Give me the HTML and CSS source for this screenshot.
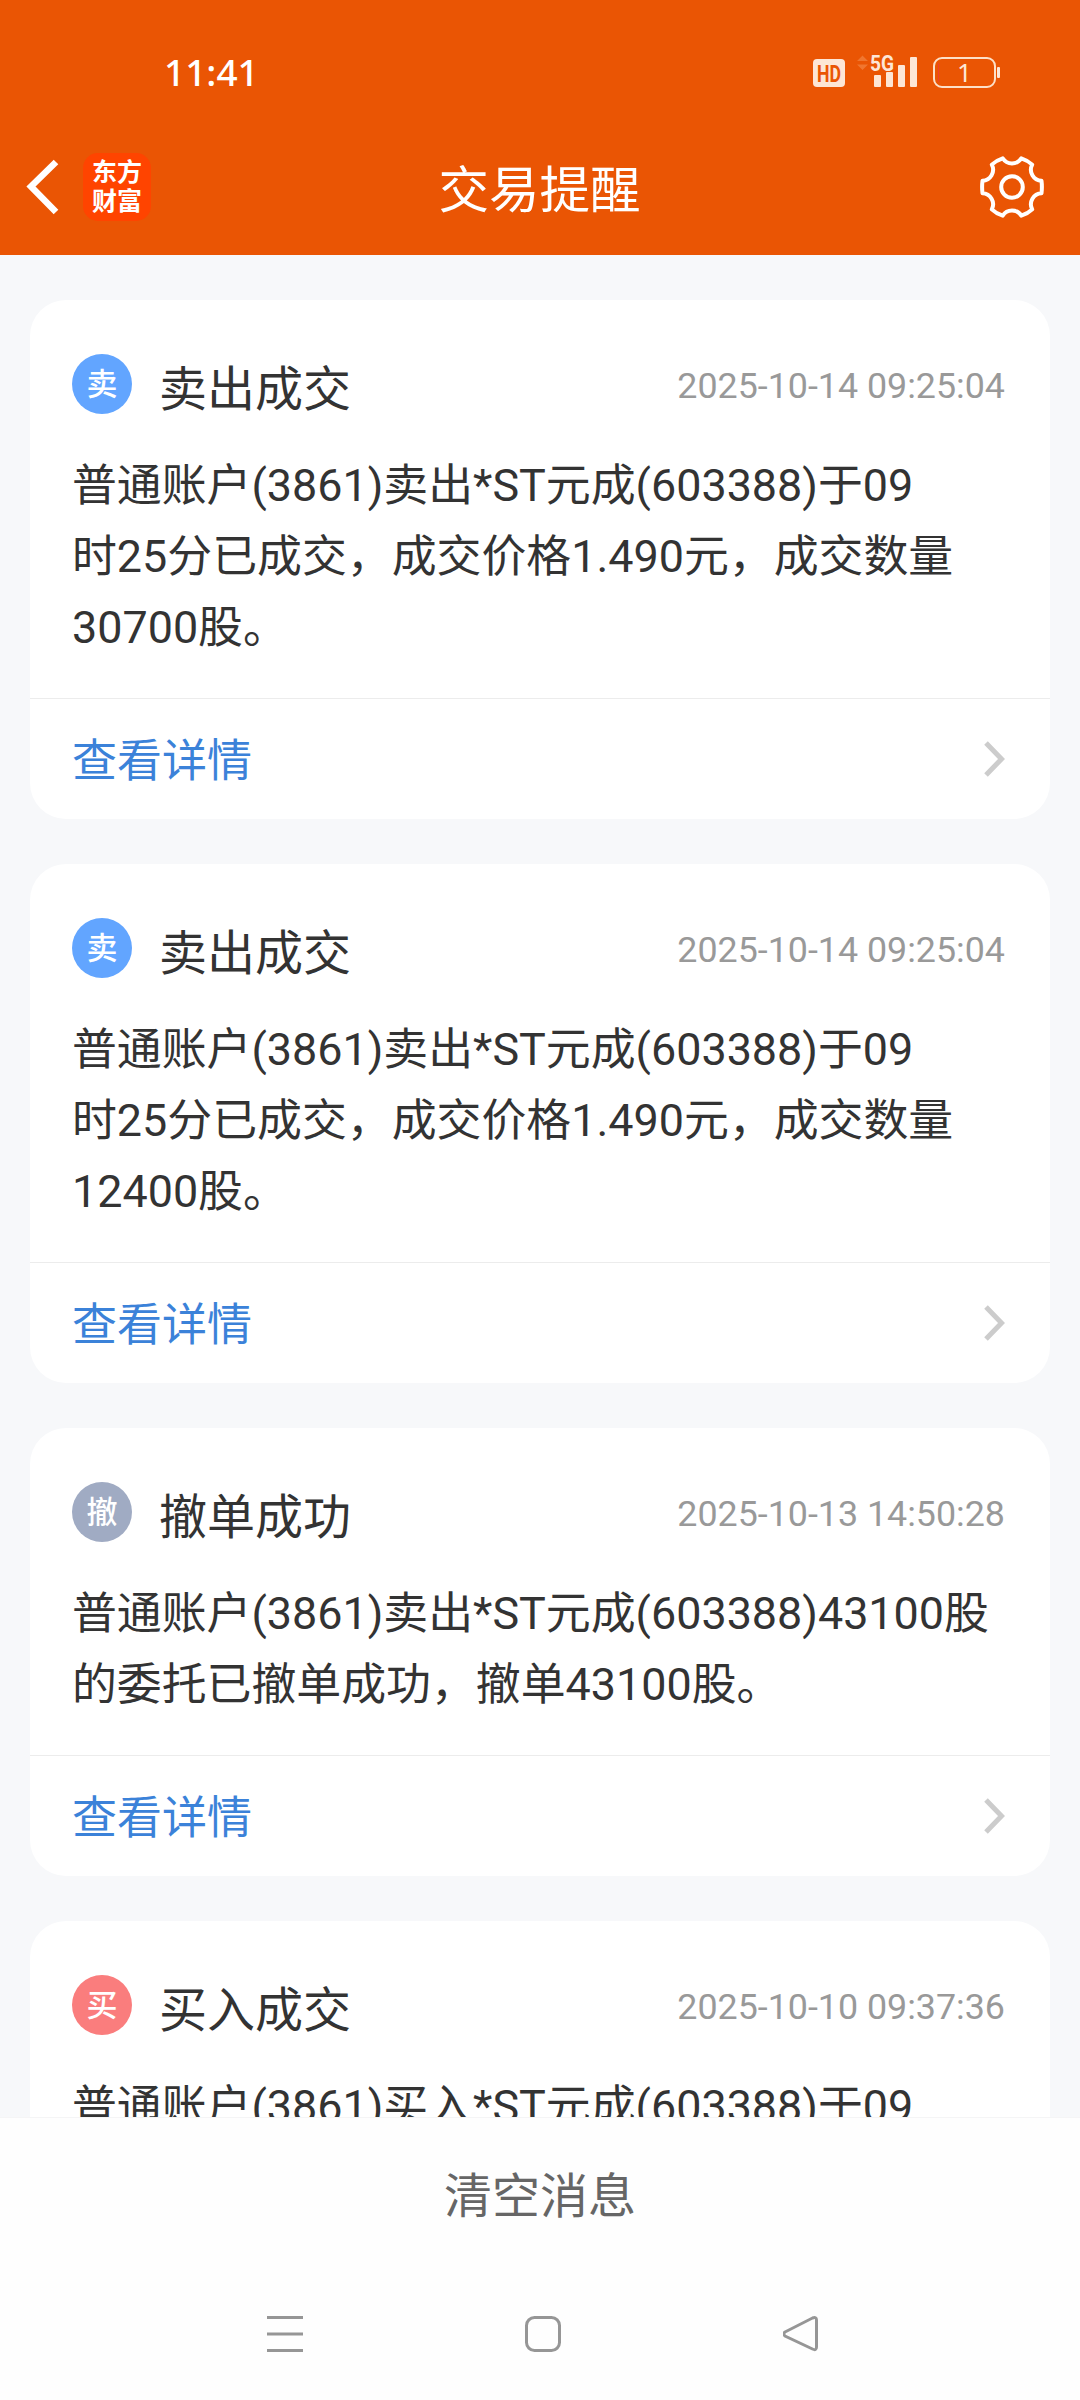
FILE: index.html
```html
<!DOCTYPE html>
<html lang="zh-CN">
<head>
    <meta charset="UTF-8">
    <meta name="viewport" content="width=device-width, initial-scale=1.0">
    <title>交易提醒</title>
    <link rel="stylesheet" href="styles.css">
</head>
<body>
    <!-- Header -->
    <header class="top">
        <div class="status-bar">
            <span class="time">11:41</span>
            <svg class="status-icons" width="190" height="40" viewBox="0 0 190 40">
                <rect x="2" y="7" width="32" height="28" rx="4" fill="#fde6d6"/>
                <text class="hd" x="6" y="29.500" textLength="24" lengthAdjust="spacingAndGlyphs">HD</text>
                <path d="M46 9 L51.500 3.500 L57 9 Z M46 12.500 L51.500 18 L57 12.500 Z" fill="#f0762f"/>
                <text class="net" x="59" y="18.500" textLength="24" lengthAdjust="spacingAndGlyphs">5G</text>
                <g fill="#fde6d6">
                    <rect x="63" y="23" width="7" height="12" rx="1"/>
                    <rect x="75" y="20" width="7" height="15" rx="1"/>
                    <rect x="87" y="13" width="7" height="22" rx="1"/>
                    <rect x="99" y="5" width="7" height="30" rx="1"/>
                    <rect x="186" y="15" width="3" height="11" rx="1"/>
                </g>
                <rect x="123" y="6" width="61" height="29" rx="8" fill="none" stroke="#fde0c8" stroke-width="2"/>
                <path d="M127.500 11 V30" stroke="#f0402a" stroke-width="1"/>
                <text class="level" x="146" y="30">1</text>
            </svg>
        </div>
        <div class="nav-bar">
            <div class="nav-left">
                <svg width="36" height="60" viewBox="0 0 36 60">
                    <path d="M32 5 L7 29.500 L32 55" fill="none" stroke="#fff" stroke-width="6.500"/>
                </svg>
                <div class="logo">东方<br>财富</div>
            </div>
            <h1>交易提醒</h1>
            <svg class="gear" width="68" height="68" viewBox="-34 -34 68 68">
                <path d="M29.500 -6.300 Q30.300 0 29.500 6.300 A11 11 0 0 0 20.200 22.400 Q16 26.500 9.300 28.700 A11 11 0 0 0 -9.300 28.700 Q-16 26.500 -20.200 22.400 A11 11 0 0 0 -29.500 6.300 Q-30.300 0 -29.500 -6.300 A11 11 0 0 0 -20.200 -22.400 Q-16 -26.500 -9.300 -28.700 A11 11 0 0 0 9.300 -28.700 Q16 -26.500 20.200 -22.400 A11 11 0 0 0 29.500 -6.300 Z"/>
                <circle r="10.800"/>
            </svg>
        </div>
    </header>

    <!-- Message List -->
    <main class="list">
        <section class="card">
            <div class="card-head">
                <span class="badge sell">卖</span>
                <h2>卖出成交</h2>
                <time>2025-10-14 09:25:04</time>
            </div>
            <p>普通账户(3861)卖出*ST元成(603388)于09<br>时25分已成交，成交价格1.490元，成交数量<br>30700股。</p>
            <a class="detail">
                查看详情
                <svg width="24" height="40" viewBox="0 0 24 40"><path d="M4 4 L19.500 20 L4 36"/></svg>
            </a>
        </section>

        <section class="card">
            <div class="card-head">
                <span class="badge sell">卖</span>
                <h2>卖出成交</h2>
                <time>2025-10-14 09:25:04</time>
            </div>
            <p>普通账户(3861)卖出*ST元成(603388)于09<br>时25分已成交，成交价格1.490元，成交数量<br>12400股。</p>
            <a class="detail">
                查看详情
                <svg width="24" height="40" viewBox="0 0 24 40"><path d="M4 4 L19.500 20 L4 36"/></svg>
            </a>
        </section>

        <section class="card">
            <div class="card-head">
                <span class="badge cancel">撤</span>
                <h2>撤单成功</h2>
                <time>2025-10-13 14:50:28</time>
            </div>
            <p>普通账户(3861)卖出*ST元成(603388)43100股<br>的委托已撤单成功，撤单43100股。</p>
            <a class="detail">
                查看详情
                <svg width="24" height="40" viewBox="0 0 24 40"><path d="M4 4 L19.500 20 L4 36"/></svg>
            </a>
        </section>

        <section class="card">
            <div class="card-head">
                <span class="badge buy">买</span>
                <h2>买入成交</h2>
                <time>2025-10-10 09:37:36</time>
            </div>
            <p>普通账户(3861)买入*ST元成(603388)于09</p>
        </section>
    </main>

    <!-- Bottom -->
    <footer>
        <button class="clear">清空消息</button>
        <div class="system-nav">
            <svg width="36" height="36" viewBox="0 0 36 36"><path d="M0 1.500 H36 M0 18 H36 M0 34.500 H36"/></svg>
            <svg width="36" height="36" viewBox="0 0 36 36"><rect x="1.500" y="1.500" width="33" height="33" rx="8"/></svg>
            <svg width="36" height="36" viewBox="0 0 36 36"><path d="M2 16 L29.500 2 Q33.500 0.500 33.500 4 V31 Q33.500 35 29.500 33 L2 20 Q-0.500 18 2 16 Z"/></svg>
        </div>
    </footer>
</body>
</html>
```
FILE: styles.css
```css
/* General Styles */
* {
    box-sizing: border-box;
}
body {
    margin: 0;
    height: 2400px;
    display: flex;
    flex-direction: column;
    overflow: hidden;
    font-family: Roboto, "Noto Sans CJK SC", sans-serif;
    background-color: #f7f8fa;
    color: #333;
}
h1, h2, p {
    margin: 0;
    font-weight: 400;
}
svg {
    display: block;
}

/* Header */
.top {
    height: 255px;
    flex: none;
    background-color: #ea5504;
    color: #fff;
}
.status-bar {
    height: 120px;
    padding: 52px 79px 0 164px;
    display: flex;
    justify-content: space-between;
}
.time {
    font: 500 37px/40px "Noto Sans", sans-serif;
}
.hd {
    font: 700 24px Roboto, sans-serif;
    fill: #ea5504;
}
.net {
    font: 700 22px Roboto, sans-serif;
    fill: #fde6d6;
}
.level {
    font: 400 26px "Noto Sans", sans-serif;
    fill: #fde6d6;
}
.nav-bar {
    height: 133px;
    padding: 0 34px 0 24px;
    display: grid;
    grid-template-columns: 1fr auto 1fr;
    align-items: center;
}
.nav-left {
    padding-top: 1px;
    display: flex;
    align-items: center;
    gap: 23px;
}
.logo {
    width: 68px;
    height: 68px;
    padding-top: 3px;
    border-radius: 15px;
    background-color: #ff4400;
    text-align: center;
    font: 700 25px/29px "Noto Sans CJK SC", sans-serif;
}
.nav-bar h1 {
    padding: 9px 0 0 9px;
    font-size: 50.5px;
    line-height: 70px;
}
.gear {
    justify-self: end;
    fill: none;
    stroke: #fff;
    stroke-width: 4;
    stroke-linejoin: round;
}

/* Message List */
.list {
    flex: 1;
    min-height: 0;
    overflow: hidden;
    padding: 45px 30px 0;
    display: flex;
    flex-direction: column;
    gap: 45px;
}
.card {
    flex: none;
    padding-top: 54px;
    border-radius: 36px;
    background-color: #fff;
}
.card-head {
    height: 60px;
    padding: 0 45px 0 42px;
    display: flex;
    align-items: center;
}
.badge {
    width: 60px;
    height: 60px;
    border-radius: 50%;
    color: #fff;
    font-size: 31px;
    font-weight: 500;
    line-height: 62px;
    text-align: center;
}
.sell {
    background-color: #62a5ff;
}
.cancel {
    background-color: #a0abc3;
}
.buy {
    background-color: #fa7d7d;
}
.card h2 {
    flex: 1;
    padding-top: 11px;
    margin-left: 27px;
    font-size: 48px;
    line-height: 60px;
}
.card time {
    padding-top: 4px;
    font-size: 35.8px;
    color: #999;
}
.card p {
    padding: 36px 0 35px 42px;
    font-size: 44.88px;
    line-height: 71px;
    white-space: nowrap;
}
.detail {
    height: 121px;
    padding: 5px 44px 0 42px;
    border-top: 1px solid #ececec;
    display: flex;
    align-items: center;
    justify-content: space-between;
    font-size: 45px;
    line-height: 66px;
    color: #3b82d9;
}
.detail svg {
    margin-bottom: 5px;
    fill: none;
    stroke: #ccc;
    stroke-width: 5;
}

/* Bottom */
footer {
    height: 283px;
    flex: none;
    border-top: 1px solid #f5f5f6;
    background-color: #fefefe;
}
.clear {
    display: block;
    width: 100%;
    height: 152px;
    padding: 0 0 5px;
    border: none;
    background: none;
    font-family: inherit;
    font-size: 48px;
    color: #666;
}
.system-nav {
    padding: 46px 0 0 6px;
    display: flex;
    justify-content: center;
    gap: 222px;
}
.system-nav svg {
    fill: none;
    stroke: #969696;
    stroke-width: 3;
}
```
